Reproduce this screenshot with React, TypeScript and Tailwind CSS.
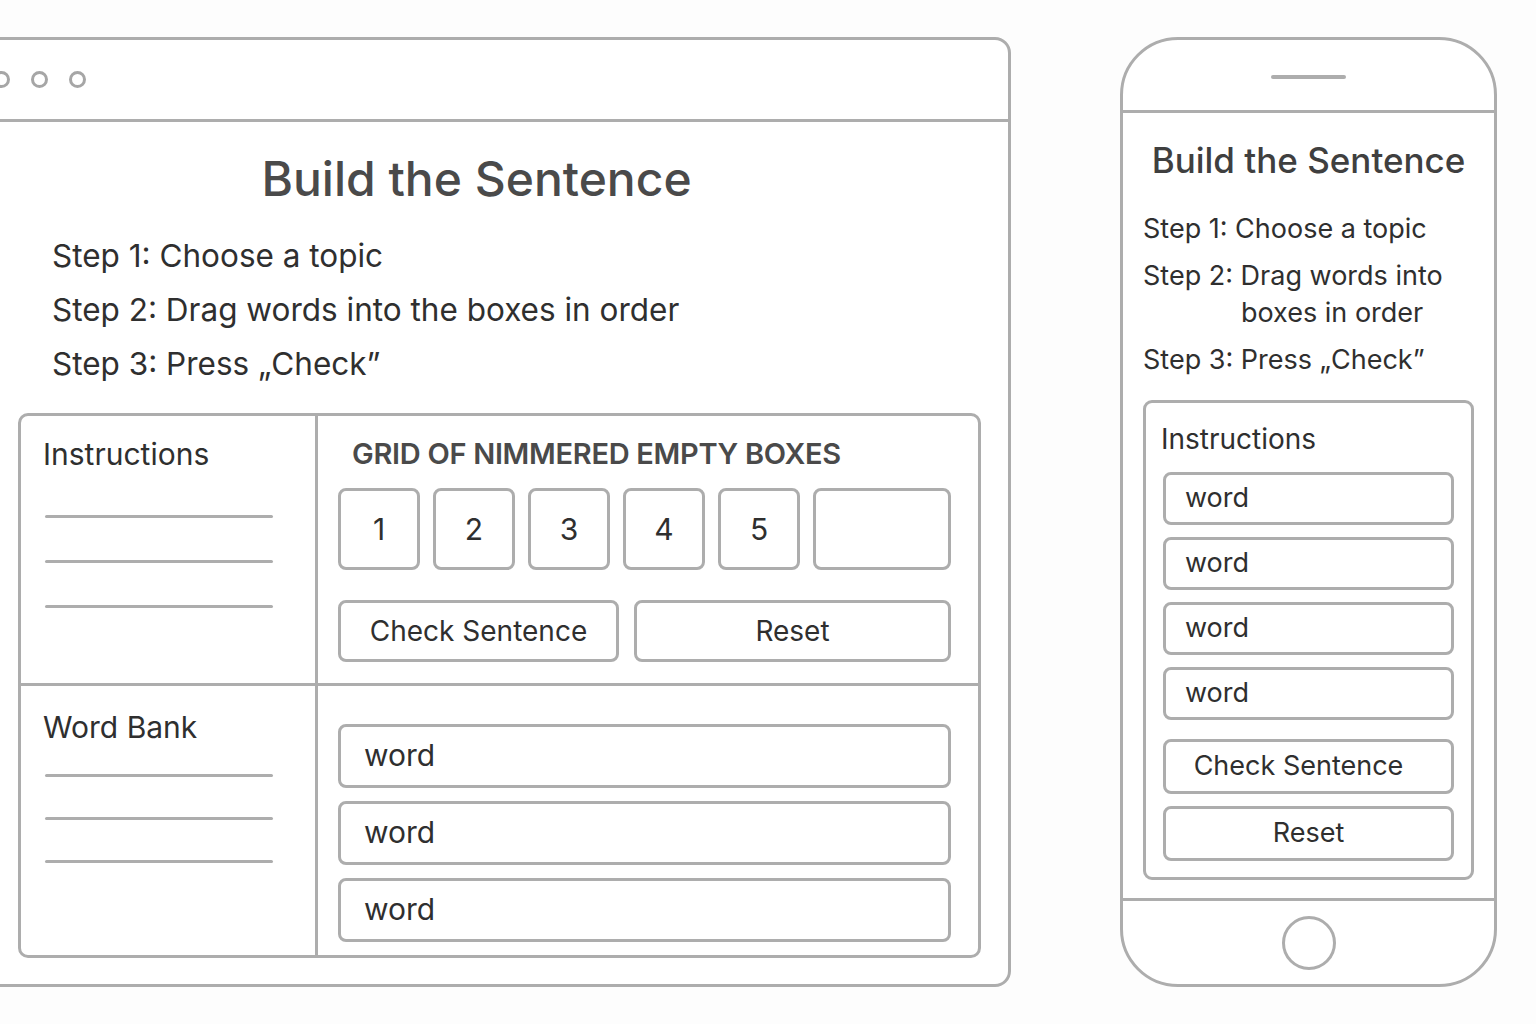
import React from "react";

const line = "h-[3px] w-[228px] rounded-full bg-[#adadad]";
const box = "border-[3px] border-[#adadad] rounded-[8px] bg-white";

function Lines({ gap }: { gap: string }) {
	return (
		<div className={`flex flex-col ${gap} pl-[24px]`}>
			<div className={line} />
			<div className={line} />
			<div className={line} />
		</div>
	);
}

function BrowserFrame() {
	return (
		<div className="ml-[-40px] mt-[37px] w-[1051px] h-[950px] flex-none flex flex-col border-[3px] border-[#adadad] rounded-r-[16px] bg-white">
			<div key="top bar" className="h-[82px] flex-none flex items-center gap-[21px] pl-[30px] border-b-[3px] border-[#adadad]">
				<div className="w-[17px] h-[17px] rounded-full border-[3px] border-[#a6a6a6]" />
				<div className="w-[17px] h-[17px] rounded-full border-[3px] border-[#a6a6a6]" />
				<div className="w-[17px] h-[17px] rounded-full border-[3px] border-[#a6a6a6]" />
			</div>
			<div className="flex flex-col">
				<h1 className="mt-[25px] text-center pr-[18px] text-[48px] leading-[64px] font-medium text-[#4a4a4a]">Build the Sentence</h1>
				<div className="mt-[18px] pl-[89px] flex flex-col text-[31.5px] leading-[54px] text-[#2f2f2f]">
					<p>Step 1: Choose a topic</p>
					<p>Step 2: Drag words into the boxes in order</p>
					<p>Step 3: Press „Check”</p>
				</div>
				<div className="ml-[55px] mt-[22px] w-[963px] h-[545px] grid grid-cols-[297px_1fr] grid-rows-2 border-[3px] border-[#adadad] rounded-[10px]">
					<div className="border-r-[3px] border-b-[3px] border-[#adadad] flex flex-col">
						<p className="pl-[22px] pt-[19px] text-[30px] leading-[38px] text-[#2f2f2f]">Instructions</p>
						<div className="mt-[42px]"><Lines gap="gap-[42px]" /></div>
					</div>
					<div className="border-b-[3px] border-[#adadad] flex flex-col pl-[20px] pr-[27px]">
						<p className="pl-[14px] pt-[19px] text-[29px] leading-[38px] font-semibold tracking-[-0.3px] text-[#4a4a4a]">GRID OF NIMMERED EMPTY BOXES</p>
						<div className="mt-[15px] flex gap-[13px] h-[82px]">
							{["1", "2", "3", "4", "5"].map((n) => (
								<div key={n} className={`${box} w-[82px] flex items-center justify-center text-[30px] text-[#2f2f2f]`}>{n}</div>
							))}
							<div className={`${box} flex-1`} />
						</div>
						<div className="mt-[30px] flex gap-[15px] h-[62px]">
							<div className={`${box} w-[281px] flex items-center justify-center text-[28px] text-[#2f2f2f]`}>Check Sentence</div>
							<div className={`${box} flex-1 flex items-center justify-center text-[28px] text-[#2f2f2f]`}>Reset</div>
						</div>
					</div>
					<div className="border-r-[3px] border-[#adadad] flex flex-col">
						<p className="pl-[22px] pt-[22px] text-[30px] leading-[38px] text-[#2f2f2f]">Word Bank</p>
						<div className="mt-[28px]"><Lines gap="gap-[40px]" /></div>
					</div>
					<div className="flex flex-col gap-[13px] pl-[20px] pr-[27px] pt-[38px]">
						{[0, 1, 2].map((i) => (
							<div key={i} className={`${box} h-[64px] flex items-center pl-[23px] text-[30px] text-[#2f2f2f]`}>word</div>
						))}
					</div>
				</div>
			</div>
		</div>
	);
}

function PhoneFrame() {
	return (
		<div className="ml-[109px] mt-[37px] w-[377px] h-[950px] flex-none flex flex-col border-[3px] border-[#adadad] rounded-[58px] bg-white">
			<div key="top" className="h-[73px] flex-none flex justify-center pt-[35px] border-b-[3px] border-[#adadad]">
				<div className="w-[75px] h-[4px] rounded-full bg-[#adadad]" />
			</div>
			<div className="flex-1 flex flex-col px-[20px]">
				<h2 className="mt-[25px] text-center whitespace-nowrap text-[35px] leading-[44px] font-medium text-[#3f3f3f]">Build the Sentence</h2>
				<div className="mt-[23px] flex flex-col text-[27px] text-[#2f2f2f] whitespace-nowrap">
					<p className="leading-[47px]">Step 1: Choose a topic</p>
					<p className="leading-[37px] pt-[5px]">Step 2: Drag words into</p>
					<p className="leading-[37px] pl-[98px]">boxes in order</p>
					<p className="leading-[47px] pt-[5px]">Step 3: Press „Check”</p>
				</div>
				<div className="mt-[17px] h-[480px] flex-none border-[3px] border-[#adadad] rounded-[9px] flex flex-col px-[17px]">
					<p className="pt-[18px] text-[28px] leading-[36px] text-[#2f2f2f] -ml-[2px]">Instructions</p>
					<div className="mt-[15px] flex flex-col gap-[12px]">
						{[0, 1, 2, 3].map((i) => (
							<div key={i} className={`${box} h-[53px] flex items-center pl-[19px] text-[27px] text-[#2f2f2f]`}>word</div>
						))}
					</div>
					<div className="mt-[19px] flex flex-col gap-[12px]">
						<div className={`${box} h-[55px] flex items-center justify-center pr-[20px] text-[27px] text-[#2f2f2f]`}>Check Sentence</div>
						<div className={`${box} h-[55px] flex items-center justify-center text-[27px] text-[#2f2f2f]`}>Reset</div>
					</div>
				</div>
			</div>
			<div key="bottom" className="h-[86px] flex-none flex items-center justify-center border-t-[3px] border-[#adadad]">
				<div className="w-[54px] h-[54px] rounded-full border-[3px] border-[#adadad]" />
			</div>
		</div>
	);
}

export default function App() {
	return (
		<div className="w-[1536px] h-[1024px] overflow-hidden bg-[#fdfdfd] flex font-['Inter',sans-serif]">
			<BrowserFrame />
			<PhoneFrame />
		</div>
	);
}
